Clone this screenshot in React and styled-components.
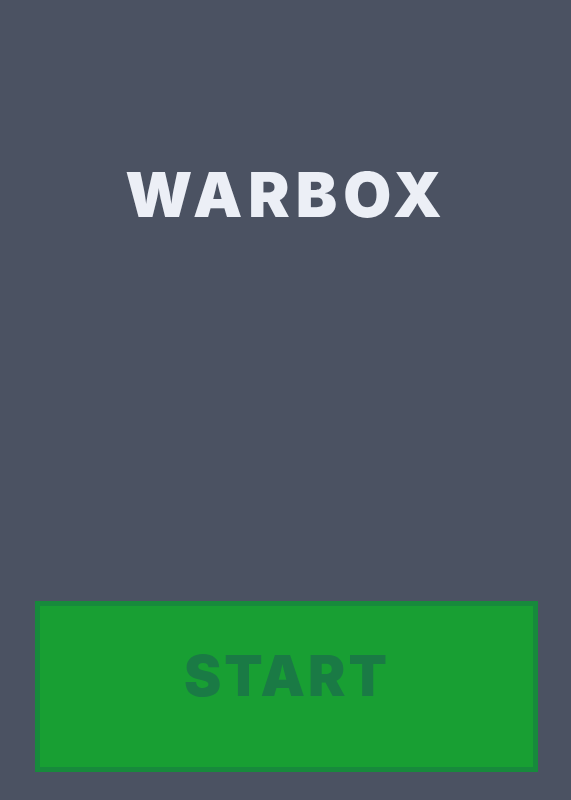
import styled, { createGlobalStyle } from "styled-components";

const Global = createGlobalStyle`
  html, body {
    margin: 0;
    padding: 0;
    height: 100%;
    background: #4b5262;
  }
  #root {
    height: 100%;
  }
`;

const Screen = styled.div`
  display: flex;
  flex-direction: column;
  align-items: stretch;
  height: 100vh;
  box-sizing: border-box;
  padding: 0 33px 28px 35px;
  background: #4b5262;
  font-family: Inter, "Liberation Sans", sans-serif;
`;

const Title = styled.h1`
  margin: 160px 0 0;
  text-align: center;
  font-size: 62px;
  font-weight: 900;
  line-height: 70px;
  letter-spacing: 6px;
  color: #eceff6;
`;

const Spacer = styled.div`
  flex: 1;
`;

const StartButton = styled.button`
  display: flex;
  align-items: center;
  justify-content: center;
  height: 171px;
  box-sizing: border-box;
  border: 5px solid #178a3c;
  background: #189f33;
  color: #1a7a45;
  font-family: Inter, "Liberation Sans", sans-serif;
  font-size: 56px;
  font-weight: 900;
  letter-spacing: 3px;
  cursor: pointer;
  padding: 0 0 22px 1px;
`;

const App = () => (
  <>
    <Global />
    <Screen>
      <Title>WARBOX</Title>
      <Spacer />
      <StartButton>START</StartButton>
    </Screen>
  </>
);

export default App;
